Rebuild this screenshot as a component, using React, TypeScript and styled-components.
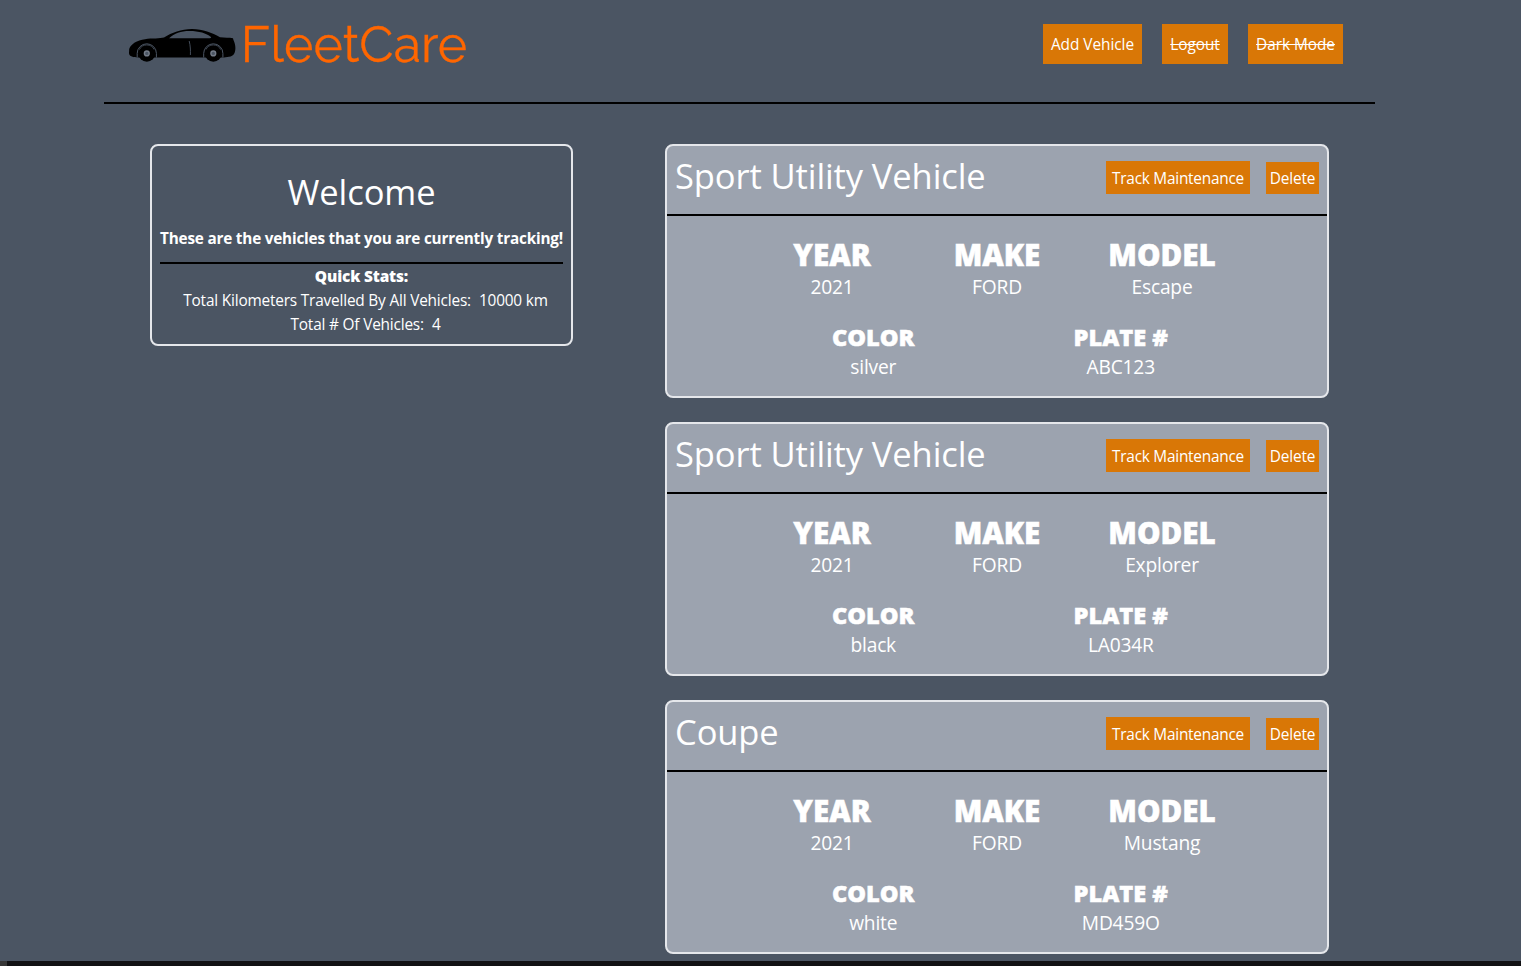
import React from "react";
import styled, { createGlobalStyle } from "styled-components";

const GlobalStyle = createGlobalStyle`
  *, *::before, *::after { box-sizing: border-box; }
  body {
    margin: 0;
    background: #4b5563;
    color: #fff;
    font-family: "Segoe UI", "Open Sans", sans-serif;
    overflow: hidden;
  }
`;

const Page = styled.div`
  height: 966px;
  display: flex;
  flex-direction: column;
`;

const Header = styled.header`
  display: flex;
  flex: none;
  justify-content: space-between;
  align-items: flex-start;
  width: 1271px;
  height: 104px;
  margin-left: 104px;
  padding: 24px 32px 0 24px;
  border-bottom: 2px solid #000;
`;

const Logo = styled.div`
  display: flex;
  height: 40px;
`;

const CarIcon = styled.svg`
  display: block;
  width: 110px;
  height: 40px;
`;

const Brand = styled.span`
  margin-left: 2.8px;
  font-family: Raleway, Lato, sans-serif;
  font-size: 50px;
  font-weight: 400;
  line-height: 42px;
  letter-spacing: 0.1px;
  color: #ff6600;
  -webkit-text-stroke: 0.3px #ff6600;
`;

const Nav = styled.nav`
  display: flex;
  gap: 20px;
`;

const Button = styled.button`
  border: 0;
  background: #d97706;
  color: #fff;
  font: inherit;
  font-size: 15.4px;
  line-height: 24px;
  white-space: nowrap;
`;

const NavButton = styled(Button)<{ $width: number; $disabled?: boolean }>`
  width: ${(p) => p.$width}px;
  height: 40px;
  padding: 9px 0 7px;
  letter-spacing: -0.04px;
  text-decoration: ${(p) => (p.$disabled ? "line-through" : "none")};
`;

const Main = styled.main`
  display: flex;
  flex: 1;
  min-height: 0;
  align-items: flex-start;
  gap: 92px;
  padding: 40px 0 0 150px;
`;

const WelcomeCard = styled.section`
  width: 423px;
  height: 202px;
  padding: 26px 8px 0;
  border: 2px solid #e5e7eb;
  border-radius: 8px;
  text-align: center;
`;

const WelcomeTitle = styled.h1`
  margin: 0 0 14px;
  font-size: 34.5px;
  font-weight: 400;
  line-height: 40px;
  letter-spacing: -0.1px;
`;

const Intro = styled.p`
  margin: 0;
  padding-bottom: 12px;
  border-bottom: 2px solid #000;
  font-size: 15.3px;
  font-weight: 700;
  line-height: 24px;
  letter-spacing: -0.2px;
  white-space: nowrap;
`;

const StatsTitle = styled.h2`
  margin: 1px 0 0;
  font-size: 15.4px;
  font-weight: 800;
  line-height: 24px;
  letter-spacing: -0.15px;
`;

const Stat = styled.div`
  display: flex;
  justify-content: center;
  gap: 8px;
  padding-left: 8px;
  font-size: 15.4px;
  line-height: 24px;
  letter-spacing: -0.19px;
  white-space: nowrap;
`;

const VehicleList = styled.div`
  display: flex;
  flex-direction: column;
  gap: 24px;
  width: 664px;
`;

const VehicleCard = styled.article`
  height: 254px;
  border: 2px solid #e5e7eb;
  border-radius: 8px;
  background: #9ca3af;
`;

const VehicleHeader = styled.div`
  display: flex;
  justify-content: space-between;
  height: 70px;
  padding: 9px 8px 0;
  border-bottom: 2px solid #000;
`;

const VehicleTitle = styled.h2`
  margin: 0;
  font-size: 34.5px;
  font-weight: 400;
  line-height: 42px;
  letter-spacing: -0.1px;
`;

const Actions = styled.div`
  display: flex;
  align-items: flex-end;
  gap: 16px;
  height: 39px;
`;

const TrackButton = styled(Button)`
  width: 144px;
  height: 33px;
  padding: 6px 0 3px;
  letter-spacing: -0.25px;
`;

const DeleteButton = styled(Button)`
  width: 53px;
  height: 32px;
  padding: 5px 0 3px;
  letter-spacing: -0.15px;
`;

const FieldRow = styled.dl<{ $top: number }>`
  display: flex;
  width: 75%;
  margin: ${(p) => p.$top}px auto 0;
  text-align: center;
`;

const Field = styled.div`
  flex: 1;
`;

const Label = styled.dt<{ $small?: boolean }>`
  font-size: ${(p) => (p.$small ? 23.6 : 29.6)}px;
  font-weight: 800;
  line-height: ${(p) => (p.$small ? 32 : 36)}px;
  -webkit-text-stroke: 0.5px #fff;
`;

const Value = styled.dd`
  margin: 0;
  font-size: 19.2px;
  line-height: 28px;
  letter-spacing: -0.2px;
`;

const Scrollbar = styled.div`
  flex: none;
  height: 5px;
  border-left: 7px solid #363636;
  background: #111113;
`;

const vehicles = [
  { type: "Sport Utility Vehicle", year: "2021", make: "FORD", model: "Escape", color: "silver", plate: "ABC123" },
  { type: "Sport Utility Vehicle", year: "2021", make: "FORD", model: "Explorer", color: "black", plate: "LA034R" },
  { type: "Coupe", year: "2021", make: "FORD", model: "Mustang", color: "white", plate: "MD459O" },
];

function Wheel({ x }: { x: number }) {
  return (
    <g>
      <path
        d={`M${x - 9.6} 33.5V29.4a9.6 9.6 0 0 1 19.2 0V33.5`}
        fill="none"
        stroke="#4b5563"
        strokeWidth="1"
      />
      <circle cx={x} cy="29.4" r="8.4" />
      <path
        d={`M${x - 7.4} 25.6a8.2 8.2 0 0 1 14.8 0`}
        fill="none"
        stroke="#4b5563"
        strokeWidth="0.8"
      />
      <circle cx={x} cy="29.4" r="2.4" fill="#4b5563" stroke="#747c88" strokeWidth="1.4" />
    </g>
  );
}

function Car() {
  return (
    <CarIcon viewBox="0 0 110 40" aria-hidden="true">
      <path d="M1.2 25C3 19.5 9 16.5 17 15.2C24 14.2 32 14.8 36 13.6C44 8.5 53 5 64 5C75 5 84 8.8 92 13.2C97 14 101 13.2 105 14.2C105.5 17 107.4 19 107.4 24C107.3 29 106 32 101 32.8L96 33.4H10C4 33.4 1 32 1 29Z" />
      <path d="M44 14.2C49 9.5 55 7 63 7C72 7 79 9.4 82.8 12.8C83.8 13.7 83.2 14.2 82 14.2Z" transform="translate(-6 0) scale(1.07 1)" fill="#4b5563" />
      <path d="M61.2 17C62.4 22 62.6 26 62.4 31" fill="none" stroke="#4b5563" strokeWidth="0.9" />
      <Wheel x={18.8} />
      <Wheel x={85.3} />
    </CarIcon>
  );
}

export default function App() {
  return (
    <>
      <GlobalStyle />
      <Page>
        <Header>
          <Logo>
            <Car />
            <Brand>FleetCare</Brand>
          </Logo>
          <Nav>
            <NavButton $width={99}>Add Vehicle</NavButton>
            <NavButton $width={66} $disabled>Logout</NavButton>
            <NavButton $width={95} $disabled>Dark Mode</NavButton>
          </Nav>
        </Header>
        <Main>
          <WelcomeCard>
            <WelcomeTitle>Welcome</WelcomeTitle>
            <Intro>These are the vehicles that you are currently tracking!</Intro>
            <StatsTitle>Quick Stats:</StatsTitle>
            <Stat>
              <span>Total Kilometers Travelled By All Vehicles:</span>
              <span>10000 km</span>
            </Stat>
            <Stat>
              <span>Total # Of Vehicles:</span>
              <span>4</span>
            </Stat>
          </WelcomeCard>
          <VehicleList>
            {vehicles.map((v) => (
              <VehicleCard key={v.plate}>
                <VehicleHeader>
                  <VehicleTitle>{v.type}</VehicleTitle>
                  <Actions>
                    <TrackButton>Track Maintenance</TrackButton>
                    <DeleteButton>Delete</DeleteButton>
                  </Actions>
                </VehicleHeader>
                <FieldRow $top={21}>
                  <Field><Label>YEAR</Label><Value>{v.year}</Value></Field>
                  <Field><Label>MAKE</Label><Value>{v.make}</Value></Field>
                  <Field><Label>MODEL</Label><Value>{v.model}</Value></Field>
                </FieldRow>
                <FieldRow $top={20}>
                  <Field><Label $small>COLOR</Label><Value>{v.color}</Value></Field>
                  <Field><Label $small>PLATE #</Label><Value>{v.plate}</Value></Field>
                </FieldRow>
              </VehicleCard>
            ))}
          </VehicleList>
        </Main>
        <Scrollbar />
      </Page>
    </>
  );
}
